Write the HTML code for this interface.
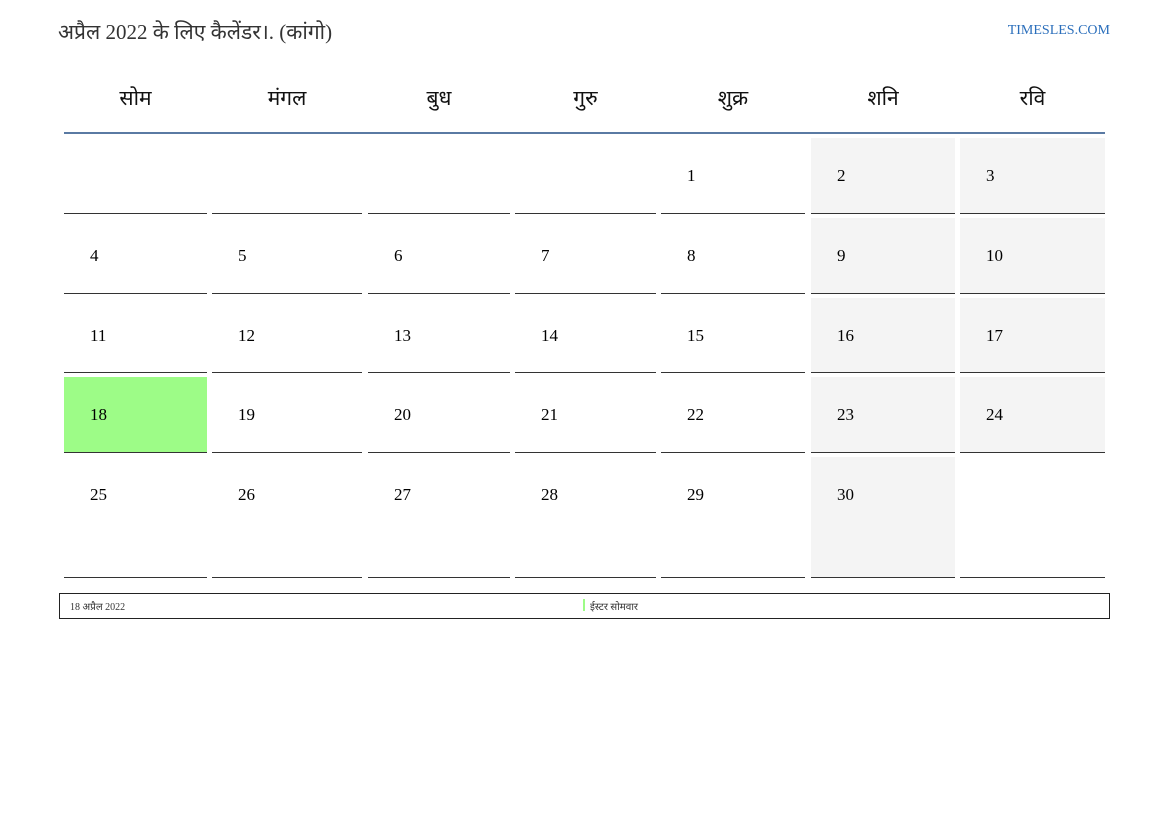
<!DOCTYPE html>
<html><head><meta charset="utf-8"><style>
body{margin:0;width:1169px;height:827px;background:#fff;position:relative;font-family:"Liberation Serif","Noto Serif CJK SC",serif;overflow:hidden}
.a{position:absolute}
.t{left:58px;top:18px;font-size:21px;color:#333}
.site{right:59px;top:23px;font-size:14px;color:#2a6ebb}
.h{position:absolute;top:84px;font-size:21px;color:#111;text-align:center}
.c{position:absolute;border-bottom:1px solid #333;font-size:17px;color:#000;box-sizing:border-box}
.c span{position:absolute;left:26px;top:28px}
.w{background:#f4f4f4}
.g{background:#9dfc87}
</style></head><body>
<div class="a t">अप्रैल 2022 के लिए कैलेंडर।. (कांगो)</div>
<div class="a site">TIMESLES.COM</div>
<div class="a" style="left:64px;top:132px;width:1041px;height:2px;background:#5a7aa3"></div>
<div id="g"></div>
<div class="a" style="left:59px;top:593px;width:1049px;height:24px;border:1px solid #222"></div>
<div class="a" style="left:70px;top:599px;font-size:10px;color:#333">18 अप्रैल 2022</div>
<div class="a" style="left:583px;top:599px;width:2px;height:12px;background:#9dfc87"></div>
<div class="a" style="left:590px;top:599px;font-size:10px;color:#333">ईस्टर सोमवार</div>
<script>
var xs=[[64,207],[212,362],[368,510],[515,656],[661,805],[811,955],[960,1105]];
var ys=[[138,214],[218,294],[298,373],[377,453],[457,578]];
var hd=["सोम","मंगल","बुध","गुरु","शुक्र","शनि","रवि"];
var h="";
for(var i=0;i<7;i++)h+='<div class="h" style="left:'+xs[i][0]+'px;width:'+(xs[i][1]-xs[i][0])+'px">'+hd[i]+'</div>';
var d=-4;
for(var r=0;r<5;r++)for(var i=0;i<7;i++){d++;var n=d>=1&&d<=30?d:"";
var cl="c";if(i>=5&&!(r==4&&i==6))cl+=" w";if(d==18)cl+=" g";
h+='<div class="'+cl+'" style="left:'+xs[i][0]+'px;top:'+ys[r][0]+'px;width:'+(xs[i][1]-xs[i][0])+'px;height:'+(ys[r][1]-ys[r][0])+'px"><span>'+n+'</span></div>';}
document.getElementById("g").innerHTML=h;
</script>
</body></html>
